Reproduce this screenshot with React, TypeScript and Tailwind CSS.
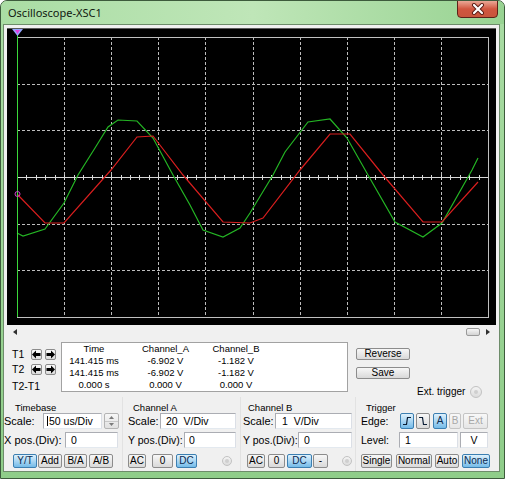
import React from 'react';
import clsx from 'clsx';

const GREEN_TRACE =
  '17,233 23,236 45,229 64,203 78,175 95,148 108,127 118,120 137,121 153,138 173,175 190,205 203,230 223,237 240,228 250,213 273,175 285,152 308,122 330,119 347,138 368,175 395,222 423,237 442,223 472,170 478,158';
const RED_TRACE =
  '17,194 45,223 64,223 111,170 137,137 153,136 183,175 223,222 250,223 263,218 300,170 330,134 350,134 383,175 423,222 442,222 478,182';

const Btn = ({
  label,
  className = '',
  active = false,
  disabled = false,
}: {
  label: React.ReactNode;
  className?: string;
  active?: boolean;
  disabled?: boolean;
}) => (
  <div
    className={clsx(
      'h-full shrink-0 flex items-center justify-center rounded-[2px] border text-[10px] leading-none',
      active
        ? 'border-[#3c7fb1] bg-linear-to-b from-[#dff1fc] to-[#74bbe8] text-[#0b2a50]'
        : disabled
          ? 'border-[#c4c4c4] bg-linear-to-b from-[#f8f8f8] to-[#e6e6e6] text-[#a8a8a8]'
          : 'border-[#8c8c8c] bg-linear-to-b from-[#f7f7f7] to-[#d9d9d9] text-black',
      className,
    )}
  >
    {label}
  </div>
);

const Field = ({ children, className = '' }: { children: React.ReactNode; className?: string }) => (
  <div
    className={clsx(
      'h-full shrink-0 bg-white border border-[#abadb3] border-b-[#e3e9ef] border-r-[#dbdfe6] flex items-center text-[10.5px] whitespace-pre',
      className,
    )}
  >
    {children}
  </div>
);

const Radio = ({ className = '' }: { className?: string }) => (
  <div
    className={clsx(
      'shrink-0 rounded-full border border-[#c2c2c2] bg-linear-to-b from-[#f4f4f4] to-[#dcdcdc] flex items-center justify-center',
      className,
    )}
  >
    <div className="w-[4px] h-[4px] rounded-full bg-[#cfcfcf]" />
  </div>
);

const Arrow = ({ dir }: { dir: 'left' | 'right' }) => (
  <div className="w-[11px] h-[11px] shrink-0 rounded-[2px] border border-[#8c8c8c] bg-linear-to-b from-[#fafafa] to-[#dcdcdc] flex items-center justify-center">
    <svg width="9" height="9" viewBox="0 0 9 9">
      {dir === 'left' ? (
        <polygon points="0,4.5 4,0.5 4,3 8.5,3 8.5,6 4,6 4,8.5" fill="#000" />
      ) : (
        <polygon points="9,4.5 5,0.5 5,3 0.5,3 0.5,6 5,6 5,8.5" fill="#000" />
      )}
    </svg>
  </div>
);

const Scope = () => {
  const gx = Array.from({ length: 9 }, (_, i) => Math.round(17 + 47.1 * (i + 1)) + 0.5);
  const gy = [1, 2, 4, 5].map((j) => Math.round(37 + 46.67 * j) + 0.5);
  const ticks = Array.from({ length: 49 }, (_, k) => Math.round(17 + 9.42 * (k + 1)) + 0.5);
  return (
    <div className="mt-[3px] ml-[3px] w-[489px] h-[297px] bg-black border-t border-[#5a5a5a]">
      <svg width="489" height="296" viewBox="7 29 489 296">
        <g stroke="#bdbdbd" strokeWidth="1" strokeDasharray="3 2" shapeRendering="crispEdges">
          {gx.map((x) => (
            <line key={x} x1={x} y1="37" x2={x} y2="317" />
          ))}
          {gy.map((y) => (
            <line key={y} x1="17" y1={y} x2="488" y2={y} />
          ))}
        </g>
        <g stroke="#d8d8d8" strokeWidth="1" shapeRendering="crispEdges">
          <line x1="17" y1="177.5" x2="488" y2="177.5" />
          {ticks.map((x) => (
            <line key={x} x1={x} y1="175" x2={x} y2="180" />
          ))}
          <rect x="17.5" y="37.5" width="470.5" height="280" fill="none" stroke="#c0c0c0" />
        </g>
        <polyline points={GREEN_TRACE} fill="none" stroke="#24b524" strokeWidth="1.2" />
        <polyline points={RED_TRACE} fill="none" stroke="#d81e1e" strokeWidth="1.2" />
        <line x1="17.5" y1="30" x2="17.5" y2="317" stroke="#3ad83a" strokeWidth="1" shapeRendering="crispEdges" />
        <polygon points="12,29 23,29 17.5,36" fill="#95a6ff" />
        <polygon points="15,30 20,30 17.5,34" fill="#e23ee2" />
        <circle cx="17.5" cy="194" r="2.5" fill="none" stroke="#d040d0" strokeWidth="1" />
      </svg>
    </div>
  );
};

const EdgeIcon = ({ rise }: { rise: boolean }) => (
  <svg width="10" height="10" viewBox="0 0 10 10">
    <path
      d={rise ? 'M1 8.5 H4.5 L5.5 1.5 H9' : 'M1 1.5 H4.5 L5.5 8.5 H9'}
      fill="none"
      stroke="#0b1e36"
      strokeWidth="1.2"
    />
  </svg>
);

export default function App() {
  return (
    <div className="w-[505px] h-[479px] border border-[#3d5b3c] rounded-t-[7px] bg-linear-to-b from-[#a9dca3] to-[#8fcd89] font-['Liberation_Sans',Arial,sans-serif] text-black overflow-hidden">
      {/* title bar */}
      <div className="h-[23px] flex items-start bg-linear-to-r from-[#aadda4] via-[#bfe6b8] to-[#98d392]">
        <div className="pl-[7px] pt-[4px] text-[11px] leading-[15px] font-['Noto_Sans','Open_Sans',sans-serif] text-[#101810]">
          Oscilloscope-XSC1
        </div>
        <div className="ml-auto mr-[6px] w-[41px] h-[18px] -mt-px rounded-b-[4px] border border-[#5c2219] bg-linear-to-b from-[#e9a796] via-[#d0563f] to-[#c8553c] flex items-center justify-center">
          <svg width="14" height="12" viewBox="0 0 14 12">
            <path d="M3 2 L11 10 M11 2 L3 10" stroke="#5a1c14" strokeWidth="4" strokeLinecap="round" />
            <path d="M3 2 L11 10 M11 2 L3 10" stroke="#ffffff" strokeWidth="2.2" strokeLinecap="round" />
          </svg>
        </div>
      </div>

      {/* client area */}
      <div className="ml-[2px] w-[497px] h-[448px] border border-[#6d8c6a] bg-[#f0f0f0] flex flex-col">
        <Scope />

        {/* scrollbar */}
        <div className="h-[14px] flex items-center">
          <svg className="ml-[9px]" width="4" height="6" viewBox="0 0 4 6">
            <polygon points="0,3 4,0 4,6" fill="#303030" />
          </svg>
          <div className="ml-auto w-[14px] h-[8px] rounded-[2px] border border-[#9a9a9a] bg-linear-to-b from-[#f6f6f6] to-[#d4d4d4]" />
          <svg className="ml-[6px] mr-[9px]" width="4" height="6" viewBox="0 0 4 6">
            <polygon points="4,3 0,0 0,6" fill="#303030" />
          </svg>
        </div>

        {/* cursor readout */}
        <div className="h-[58px] flex items-start">
          <div className="w-[57px] shrink-0 pl-[8px] text-[10.5px] leading-none">
            <div className="mt-[9px] h-[12px] flex items-center">
              <span className="w-[19px]">T1</span>
              <Arrow dir="left" />
              <div className="w-[3px]" />
              <Arrow dir="right" />
            </div>
            <div className="mt-[3px] h-[12px] flex items-center">
              <span className="w-[19px]">T2</span>
              <Arrow dir="left" />
              <div className="w-[3px]" />
              <Arrow dir="right" />
            </div>
            <div className="mt-[5px] h-[12px] flex items-center">T2-T1</div>
          </div>

          <div className="mt-[3px] w-[287px] h-[50px] shrink-0 bg-white border border-[#a2a2a2] grid grid-cols-[64px_79px_62px] auto-rows-[12px] text-[9.5px] leading-[12px] text-center whitespace-pre">
            <span>Time</span>
            <span>Channel_A</span>
            <span>Channel_B</span>
            <span>141.415 ms</span>
            <span>-6.902 V</span>
            <span>-1.182 V</span>
            <span>141.415 ms</span>
            <span>-6.902 V</span>
            <span>-1.182 V</span>
            <span>0.000 s</span>
            <span>0.000 V</span>
            <span>0.000 V</span>
          </div>

          <div className="ml-[8px] pt-[9px] flex flex-col">
            <Btn label="Reverse" className="w-[54px] h-[18px]" />
            <Btn label="Save" className="mt-[7px] w-[54px] h-[18px]" />
          </div>

          <div className="ml-[7px] mt-[47px] h-[12px] flex items-center text-[10px] leading-none">
            <span>Ext. trigger</span>
            <Radio className="ml-[5px] w-[12px] h-[12px]" />
          </div>
        </div>

        {/* controls */}
        <div className="h-[74px] flex text-[10.5px] leading-none whitespace-nowrap">
          {/* Timebase */}
          <div className="w-[118px] shrink-0 flex flex-col">
            <div className="mt-[5px] h-[11px] pl-[11px] text-[9.5px] flex items-center">Timebase</div>
            <div className="h-[16px] flex items-center">
              <span className="w-[39px] shrink-0 text-[11px]">Scale:</span>
              <Field className="w-[59px] pl-[3px]">
                <span className="w-px h-[10px] bg-black mr-px" />50 us/Div
              </Field>
              <div className="ml-[2px] w-[15px] h-full flex flex-col border border-[#b4b4b4] rounded-[2px] bg-linear-to-b from-[#f7f7f7] to-[#e0e0e0]">
                <div className="flex-1 flex items-center justify-center border-b border-[#c8c8c8]">
                  <svg width="5" height="3" viewBox="0 0 5 3"><polygon points="2.5,0 5,3 0,3" fill="#7a7a7a" /></svg>
                </div>
                <div className="flex-1 flex items-center justify-center">
                  <svg width="5" height="3" viewBox="0 0 5 3"><polygon points="0,0 5,0 2.5,3" fill="#7a7a7a" /></svg>
                </div>
              </div>
            </div>
            <div className="mt-[3px] h-[16px] flex items-center">
              <span className="w-[61px] shrink-0 text-[11px]">X pos.(Div):</span>
              <Field className="w-[53px] pl-[5px]">0</Field>
            </div>
            <div className="mt-[6px] h-[14px] flex pl-[9px]">
              <Btn label="Y/T" active className="w-[24px]" />
              <Btn label="Add" className="ml-[1px] w-[24px]" />
              <Btn label="B/A" className="ml-[2px] w-[23px]" />
              <Btn label="A/B" className="ml-[2px] w-[24px]" />
            </div>
          </div>

          {/* Channel A */}
          <div className="w-[118px] shrink-0 flex flex-col border-l border-[#e2e2e2] pl-[5px]">
            <div className="mt-[5px] h-[11px] pl-[5px] text-[9.5px] flex items-center">Channel A</div>
            <div className="h-[16px] flex items-center">
              <span className="w-[32px] shrink-0 text-[11px]">Scale:</span>
              <Field className="w-[76px] pl-[5px]">20  V/Div</Field>
            </div>
            <div className="mt-[3px] h-[16px] flex items-center">
              <span className="w-[56px] shrink-0">Y pos.(Div):</span>
              <Field className="w-[52px] pl-[4px]">0</Field>
            </div>
            <div className="mt-[6px] h-[14px] flex items-center">
              <Btn label="AC" className="w-[18px]" />
              <Btn label="0" className="ml-[6px] w-[21px]" />
              <Btn label="DC" active className="ml-[3px] w-[21px]" />
              <Radio className="ml-[25px] w-[10px] h-[10px]" />
            </div>
          </div>

          {/* Channel B */}
          <div className="w-[115px] shrink-0 flex flex-col border-l border-[#e2e2e2] pl-[2px]">
            <div className="mt-[5px] h-[11px] pl-[5px] text-[9.5px] flex items-center">Channel B</div>
            <div className="h-[16px] flex items-center">
              <span className="w-[32px] shrink-0 text-[11px]">Scale:</span>
              <Field className="w-[77px] pl-[6px]">1  V/Div</Field>
            </div>
            <div className="mt-[3px] h-[16px] flex items-center">
              <span className="w-[55px] shrink-0">Y pos.(Div):</span>
              <Field className="w-[54px] pl-[5px]">0</Field>
            </div>
            <div className="mt-[6px] h-[14px] flex items-center pl-[4px]">
              <Btn label="AC" className="w-[18px]" />
              <Btn label="0" className="ml-[3px] w-[17px]" />
              <Btn label="DC" active className="ml-[2px] w-[25px]" />
              <Btn label="-" className="ml-[1px] w-[15px]" />
              <Radio className="ml-[14px] w-[10px] h-[10px]" />
            </div>
          </div>

          {/* Trigger */}
          <div className="flex-1 flex flex-col border-l border-[#e2e2e2] pl-[5px]">
            <div className="mt-[5px] h-[11px] pl-[5px] text-[9.5px] flex items-center">Trigger</div>
            <div className="h-[16px] flex items-center">
              <span className="w-[39px] shrink-0">Edge:</span>
              <Btn label={<EdgeIcon rise />} active className="w-[14px] h-[15px]" />
              <Btn label={<EdgeIcon rise={false} />} className="ml-[2px] w-[14px] h-[15px]" />
              <Btn label="A" active className="ml-[3px] w-[14px] h-[15px]" />
              <Btn label="B" disabled className="ml-[2px] w-[12px] h-[15px]" />
              <Btn label="Ext" disabled className="ml-[2px] w-[25px] h-[15px]" />
            </div>
            <div className="mt-[3px] h-[16px] flex items-center">
              <span className="w-[38px] shrink-0">Level:</span>
              <Field className="w-[59px] pl-[5px]">1</Field>
              <Field className="ml-[2px] w-[28px] justify-center">V</Field>
            </div>
            <div className="mt-[6px] h-[14px] flex items-center">
              <Btn label="Single" className="w-[31px]" />
              <Btn label="Normal" className="ml-[4px] w-[36px]" />
              <Btn label="Auto" className="ml-[3px] w-[24px]" />
              <Btn label="None" active className="ml-[3px] w-[28px]" />
            </div>
          </div>
        </div>
      </div>
    </div>
  );
}
